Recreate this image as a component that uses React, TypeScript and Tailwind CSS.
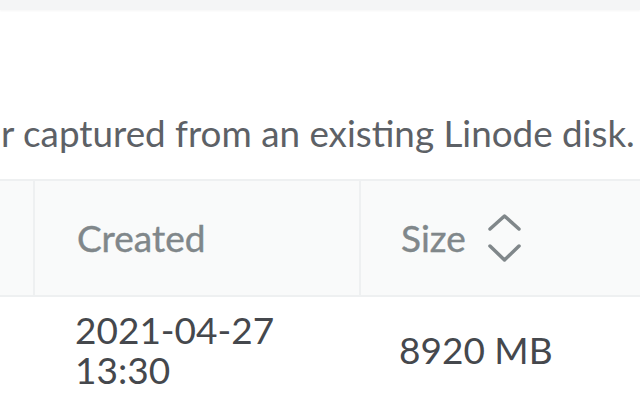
export default function App() {
  return (
    <div className="w-[640px] h-[400px] overflow-hidden bg-white font-['Lato','Liberation_Sans',sans-serif]">
      {/* top strip */}
      <div className="h-[10px] bg-[#f4f5f6] shadow-[0_1px_2px_rgba(0,0,0,0.04)]" />

      <div className="h-[98px]" />

      <p className="whitespace-nowrap pl-[1px] text-[36.8px] leading-[50px] text-[#5d6166]">
        r captured from an existing Linode disk.
      </p>

      <div className="h-[21px]" />

      <table className="w-full border-collapse">
        <thead>
          <tr className="h-[116px] bg-[#f9fafa] border-y-2 border-[#eef0f1]">
            <th className="w-[34px] border-r-2 border-[#eef0f1] p-0" />
            <th className="w-[326px] border-r-2 border-[#eef0f1] pl-[42px] text-left text-[37px] font-normal text-[#80878a] [-webkit-text-stroke:0.4px_#80878a]">
              Created
            </th>
            <th className="pl-[40px] text-left text-[37px] font-normal text-[#80878a] [-webkit-text-stroke:0.4px_#80878a]">
              <span className="inline-flex items-center gap-[21px]">
                Size
                <svg width="35" height="48" viewBox="0 0 35 48" fill="none" stroke="#80878a" strokeWidth="3.5" strokeLinecap="round" strokeLinejoin="round">
                  <polyline points="3,15 17.5,2 32,15" />
                  <polyline points="3,32 17.5,46 32,32" />
                </svg>
              </span>
            </th>
          </tr>
        </thead>
        <tbody>
          <tr>
            <td />
            <td className="pl-[41px] pt-[13px] text-[37px] text-[#45484d]">
              <div className="h-[40px] leading-[40px]">2021-04-27</div>
              <div className="h-[40px] leading-[40px]">13:30</div>
            </td>
            <td className="pl-[39px] pt-[13px] text-[37px] leading-[40px] text-[#45484d]">8920 MB</td>
          </tr>
        </tbody>
      </table>
    </div>
  );
}
